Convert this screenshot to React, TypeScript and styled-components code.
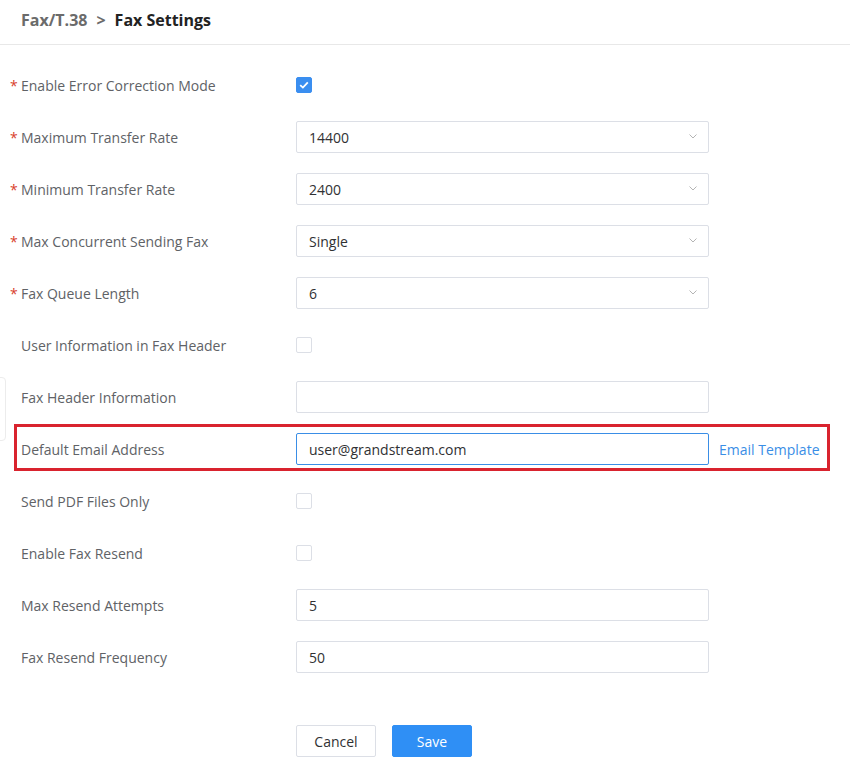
import React from "react";
import styled, { createGlobalStyle } from "styled-components";

const GlobalStyle = createGlobalStyle`
  body {
    margin: 0;
    background: #ffffff;
    font-family: "Open Sans", "Noto Sans", sans-serif;
  }
`;

const Page = styled.div`
  position: relative;
  width: 850px;
  min-height: 772px;
  background: #fff;
`;

const Header = styled.div`
  height: 45px;
  border-bottom: 1px solid #e8e8e8;
  display: flex;
  align-items: center;
  padding-left: 21px;
  padding-bottom: 5px;
  box-sizing: border-box;
  font-size: 16px;
  font-weight: 700;
`;

const Crumb = styled.span`
  color: #6b6b6b;
`;

const Sep = styled.span`
  color: #6b6b6b;
  font-weight: 700;
  margin: 0 9px 0 9px;
`;

const Current = styled.span`
  color: #222;
`;

const Form = styled.div`
  padding: 14px 0 0 10px;
`;

const Row = styled.div`
  position: relative;
  height: 52px;
  display: flex;
  align-items: center;
`;

const Label = styled.div`
  width: 286px;
  display: flex;
  align-items: center;
  font-size: 14px;
  color: #606266;
`;

const Star = styled.span<{ show: boolean }>`
  width: 11px;
  color: #d8402c;
  font-size: 14px;
  visibility: ${(p) => (p.show ? "visible" : "hidden")};
`;

const Field = styled.div<{ focused?: boolean }>`
  position: relative;
  width: 413px;
  height: 32px;
  box-sizing: border-box;
  border: 1px solid ${(p) => (p.focused ? "#3a8ee6" : "#dcdfe6")};
  border-radius: 2px;
  display: flex;
  align-items: center;
  padding-left: 12px;
  font-size: 14px;
  color: #303133;
`;

const Chevron = styled.svg`
  position: absolute;
  right: 11px;
  top: 50%;
  margin-top: -3px;
`;

const Box = styled.span<{ checked?: boolean }>`
  width: 16px;
  height: 16px;
  box-sizing: border-box;
  border-radius: 2px;
  border: 1px solid ${(p) => (p.checked ? "#3a8ef0" : "#dcdfe6")};
  background: ${(p) => (p.checked ? "#3a8ef0" : "#fff")};
  display: flex;
  align-items: center;
  justify-content: center;
`;

const Link = styled.a`
  margin-left: 10px;
  font-size: 14px;
  color: #3a8ee6;
  text-decoration: none;
`;

const Highlight = styled.div`
  position: absolute;
  left: 4px;
  top: 1px;
  width: 816px;
  height: 47px;
  box-sizing: border-box;
  border: 3px solid #d9232e;
  pointer-events: none;
`;

const EdgeTab = styled.div`
  position: absolute;
  left: -6px;
  top: 377px;
  width: 10px;
  height: 62px;
  border: 1px solid #ececec;
  border-radius: 4px;
`;

const Actions = styled.div`
  display: flex;
  gap: 16px;
  padding-left: 296px;
  margin-top: 42px;
`;

const Button = styled.button<{ primary?: boolean }>`
  width: 80px;
  height: 32px;
  border-radius: 2px;
  font-family: "Open Sans", "Noto Sans", sans-serif;
  font-size: 14px;
  cursor: pointer;
  border: 1px solid ${(p) => (p.primary ? "#2f8ff5" : "#dcdfe6")};
  background: ${(p) => (p.primary ? "#2f8ff5" : "#fff")};
  color: ${(p) => (p.primary ? "#fff" : "#303133")};
`;

type Item =
  | { label: string; req?: boolean; kind: "check"; checked?: boolean }
  | { label: string; req?: boolean; kind: "select"; value: string }
  | { label: string; req?: boolean; kind: "input"; value: string; focused?: boolean; link?: string };

const items: Item[] = [
  { label: "Enable Error Correction Mode", req: true, kind: "check", checked: true },
  { label: "Maximum Transfer Rate", req: true, kind: "select", value: "14400" },
  { label: "Minimum Transfer Rate", req: true, kind: "select", value: "2400" },
  { label: "Max Concurrent Sending Fax", req: true, kind: "select", value: "Single" },
  { label: "Fax Queue Length", req: true, kind: "select", value: "6" },
  { label: "User Information in Fax Header", kind: "check" },
  { label: "Fax Header Information", kind: "input", value: "" },
  {
    label: "Default Email Address",
    kind: "input",
    value: "user@grandstream.com",
    focused: true,
    link: "Email Template",
  },
  { label: "Send PDF Files Only", kind: "check" },
  { label: "Enable Fax Resend", kind: "check" },
  { label: "Max Resend Attempts", kind: "input", value: "5" },
  { label: "Fax Resend Frequency", kind: "input", value: "50" },
];

const Control = ({ item }: { item: Item }) => {
  if (item.kind === "check") {
    return (
      <Box checked={item.checked}>
        {item.checked && (
          <svg width="10" height="8" viewBox="0 0 10 8">
            <path d="M1.2 4.1 L3.9 6.6 L8.8 1.4" fill="none" stroke="#fff" strokeWidth="1.8" />
          </svg>
        )}
      </Box>
    );
  }
  if (item.kind === "select") {
    return (
      <Field>
        {item.value}
        <Chevron width="8" height="5" viewBox="0 0 8 5">
          <path d="M0.5 0.5 L4 4 L7.5 0.5" fill="none" stroke="#b4b4b4" strokeWidth="1" />
        </Chevron>
      </Field>
    );
  }
  return (
    <>
      <Field focused={item.focused}>{item.value}</Field>
      {item.link && <Link href="#">{item.link}</Link>}
    </>
  );
};

export default function App() {
  return (
    <Page>
      <GlobalStyle />
      <Header>
        <Crumb>Fax/T.38</Crumb>
        <Sep>&gt;</Sep>
        <Current>Fax Settings</Current>
      </Header>
      <Form>
        {items.map((item) => (
          <Row key={item.label}>
            <Label>
              <Star show={!!item.req}>*</Star>
              {item.label}
            </Label>
            <Control item={item} />
            {item.kind === "input" && item.link && <Highlight />}
          </Row>
        ))}
      </Form>
      <Actions>
        <Button>Cancel</Button>
        <Button primary>Save</Button>
      </Actions>
      <EdgeTab />
    </Page>
  );
}
